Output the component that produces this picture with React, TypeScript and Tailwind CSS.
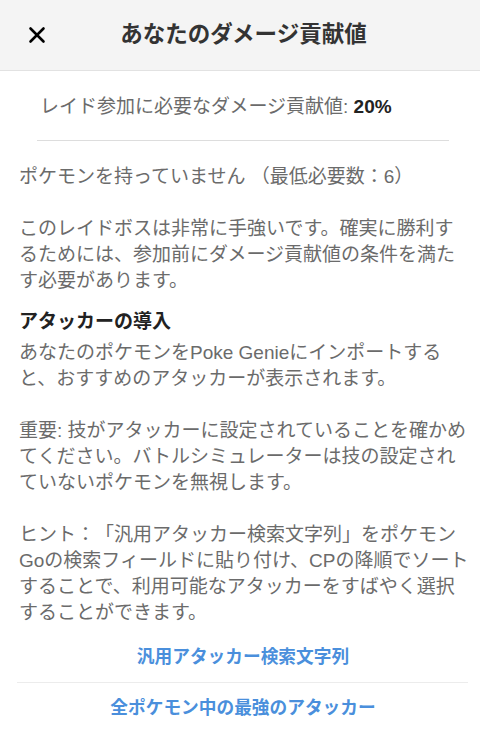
import { X } from 'lucide-react'

const font = { fontFamily: '"Liberation Sans", "Noto Sans CJK JP", sans-serif' }

function Lines({ lines }: { lines: string[] }) {
  return (
    <p className="whitespace-nowrap">
      {lines.map((l, i) => (
        <span key={i}>
          {l}
          {i < lines.length - 1 && <br />}
        </span>
      ))}
    </p>
  )
}

export default function App() {
  return (
    <div className="w-[480px] h-[747px] bg-white overflow-hidden [text-spacing-trim:space-all]" style={font}>
      {/* Header */}
      <div className="relative h-[71px] bg-[#f4f4f4] border-b border-[#e2e2e2] flex items-center justify-center">
        <button className="absolute left-[24px] top-[22px] w-[26px] h-[26px] flex items-center justify-center text-black">
          <X size={26} strokeWidth={2.4} />
        </button>
        <h1 className="pl-[7px] text-[22.5px] leading-none font-semibold text-[#333]">あなたのダメージ貢献値</h1>
      </div>

      {/* Requirement */}
      <div className="ml-[37px] mr-[31px] pt-[23px] pb-[20px] border-b border-[#dddddd]">
        <p className="pl-[3px] text-[19px] leading-[26px] text-[#6b6b6b] whitespace-nowrap">
          レイド参加に必要なダメージ貢献値: <span className="font-bold text-[#222]">20%</span>
        </p>
      </div>

      {/* Body */}
      <div className="pl-[19px] pr-[12px] pt-[23px] text-[19px] leading-[26px] text-[#6b6b6b]">
        <p className="whitespace-nowrap">ポケモンを持っていません （最低必要数：6）</p>
        <div className="h-[26px]" />
        <Lines
          lines={[
            'このレイドボスは非常に手強いです。確実に勝利す',
            'るためには、参加前にダメージ貢献値の条件を満た',
            'す必要があります。',
          ]}
        />
        <h2 className="mt-[15px] mb-[5px] font-bold text-[#222]">アタッカーの導入</h2>
        <Lines
          lines={['あなたのポケモンをPoke Genieにインポートする', 'と、おすすめのアタッカーが表示されます。']}
        />
        <div className="h-[26px]" />
        <Lines
          lines={[
            '重要: 技がアタッカーに設定されていることを確かめ',
            'てください。バトルシミュレーターは技の設定され',
            'ていないポケモンを無視します。',
          ]}
        />
        <div className="h-[26px]" />
        <Lines
          lines={[
            'ヒント：「汎用アタッカー検索文字列」をポケモン',
            'Goの検索フィールドに貼り付け、CPの降順でソート',
            'することで、利用可能なアタッカーをすばやく選択',
            'することができます。',
          ]}
        />
      </div>

      {/* Actions */}
      <div className="mt-[6px]">
        <button className="w-full h-[50px] flex items-center justify-center pl-[6px] text-[17.7px] font-semibold text-[#4a8fdc]">
          汎用アタッカー検索文字列
        </button>
        <div className="ml-[17px] mr-[12px] border-t border-[#ececec]" />
        <button className="w-full h-[50px] flex items-center justify-center pl-[6px] text-[17.7px] font-semibold text-[#4a8fdc]">
          全ポケモン中の最強のアタッカー
        </button>
      </div>
    </div>
  )
}
